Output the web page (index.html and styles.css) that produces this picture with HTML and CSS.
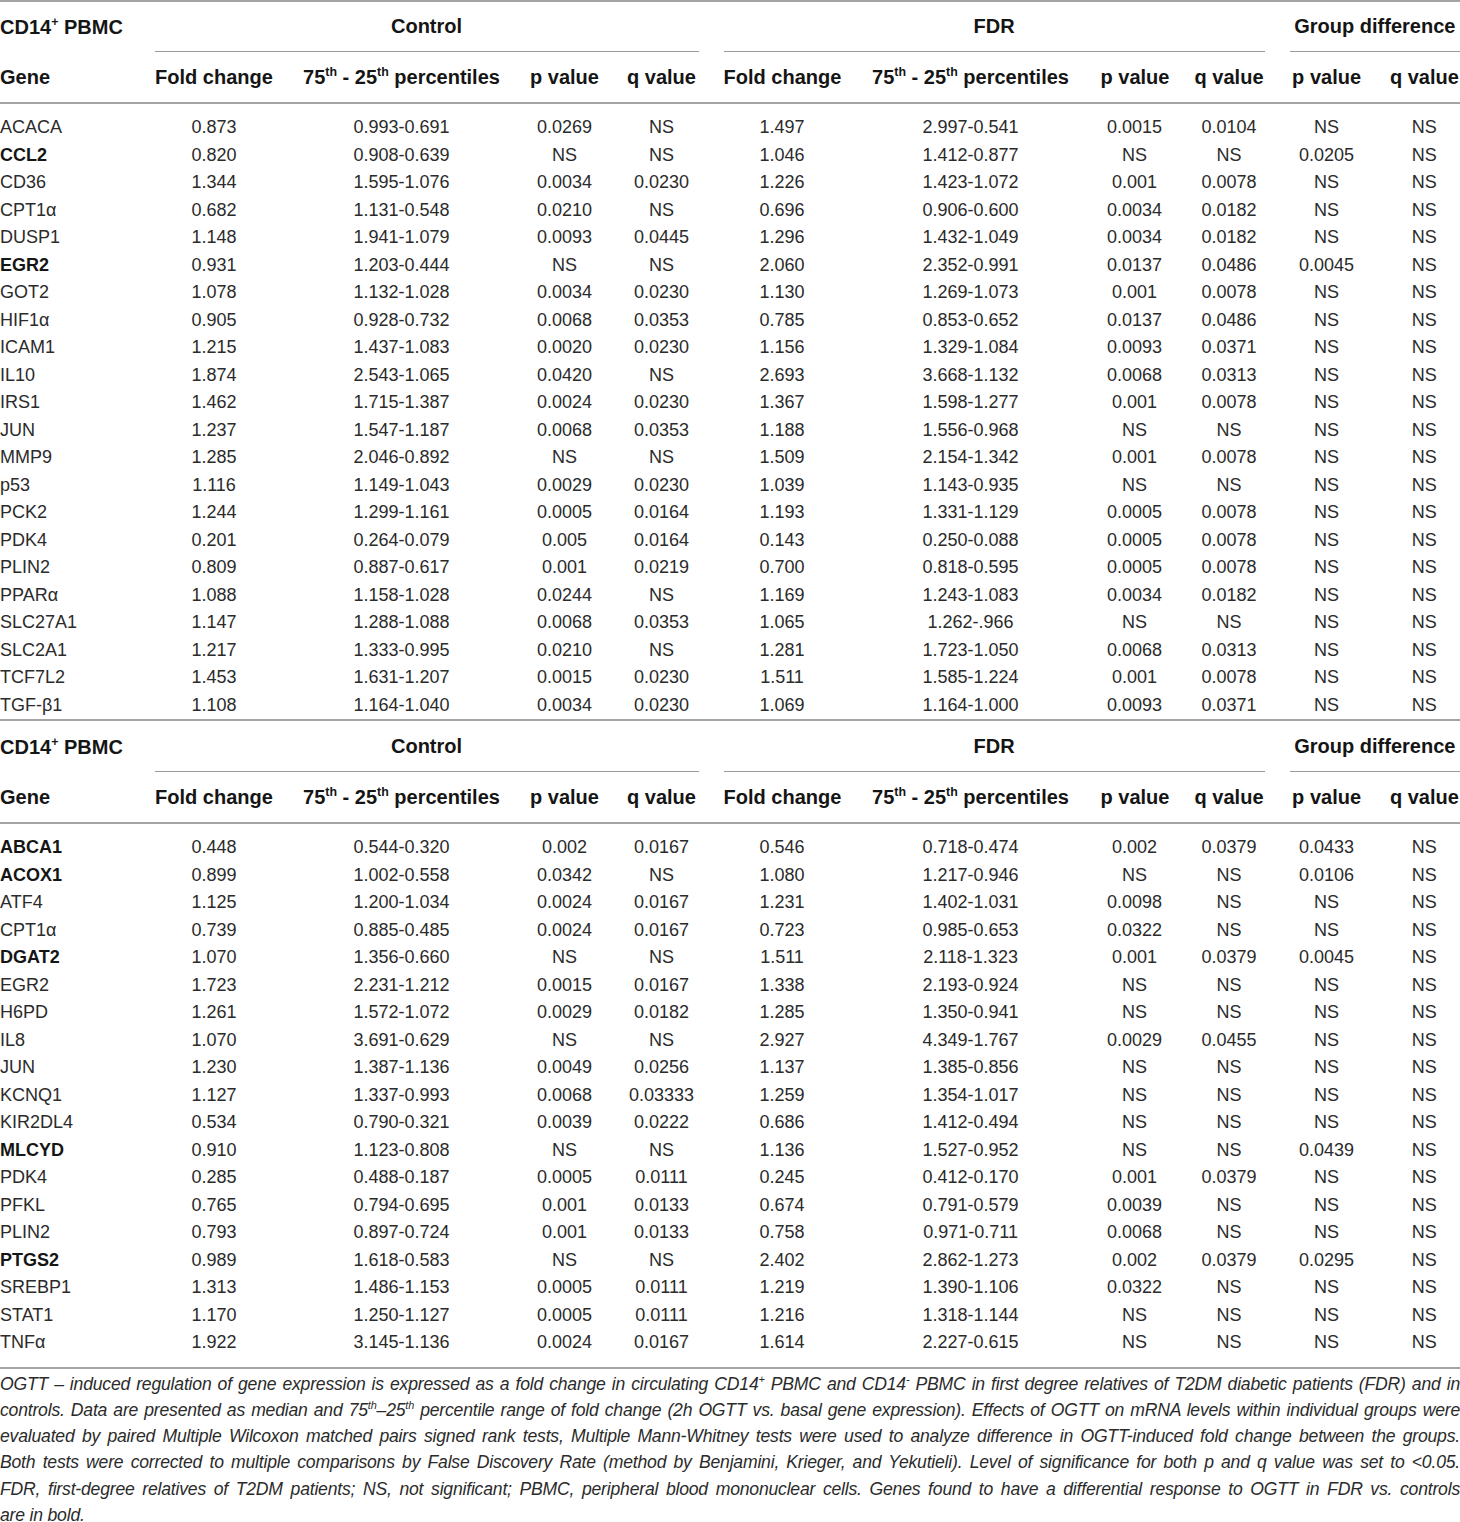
FILE: index.html
```html
<!DOCTYPE html>
<html>
  <head>
    <meta charset="utf-8">
    <title>OGTT-induced gene expression in CD14 PBMC</title>
    <link rel="stylesheet" href="styles.css">
  </head>
  <body>
    <div class="page">
      <table class="genes">
        <colgroup>
          <col class="c-gene"><col class="c-fc"><col class="c-pct"><col class="c-p"><col class="c-q">
          <col class="c-fc2"><col class="c-pct2"><col class="c-p2"><col class="c-q2">
          <col class="c-gp"><col class="c-gq">
        </colgroup>
        <thead>
          <tr class="top">
            <th class="first">CD14<sup>+</sup> PBMC</th>
            <th colspan="4" class="grp"><span>Control</span></th>
            <th colspan="4" class="grp"><span>FDR</span></th>
            <th colspan="2" class="grp last"><span>Group difference</span></th>
          </tr>
          <tr class="cols">
            <th class="first">Gene</th>
            <th>Fold change</th>
            <th>75<sup>th</sup> - 25<sup>th</sup> percentiles</th>
            <th>p value</th>
            <th>q value</th>
            <th>Fold change</th>
            <th>75<sup>th</sup> - 25<sup>th</sup> percentiles</th>
            <th>p value</th>
            <th>q value</th>
            <th>p value</th>
            <th class="last">q value</th>
          </tr>
        </thead>
        <tbody>
          <tr class="lead"><td>ACACA</td><td>0.873</td><td>0.993-0.691</td><td>0.0269</td><td>NS</td><td>1.497</td><td>2.997-0.541</td><td>0.0015</td><td>0.0104</td><td>NS</td><td>NS</td></tr>
          <tr><td class="hit">CCL2</td><td>0.820</td><td>0.908-0.639</td><td>NS</td><td>NS</td><td>1.046</td><td>1.412-0.877</td><td>NS</td><td>NS</td><td>0.0205</td><td>NS</td></tr>
          <tr><td>CD36</td><td>1.344</td><td>1.595-1.076</td><td>0.0034</td><td>0.0230</td><td>1.226</td><td>1.423-1.072</td><td>0.001</td><td>0.0078</td><td>NS</td><td>NS</td></tr>
          <tr><td>CPT1α</td><td>0.682</td><td>1.131-0.548</td><td>0.0210</td><td>NS</td><td>0.696</td><td>0.906-0.600</td><td>0.0034</td><td>0.0182</td><td>NS</td><td>NS</td></tr>
          <tr><td>DUSP1</td><td>1.148</td><td>1.941-1.079</td><td>0.0093</td><td>0.0445</td><td>1.296</td><td>1.432-1.049</td><td>0.0034</td><td>0.0182</td><td>NS</td><td>NS</td></tr>
          <tr><td class="hit">EGR2</td><td>0.931</td><td>1.203-0.444</td><td>NS</td><td>NS</td><td>2.060</td><td>2.352-0.991</td><td>0.0137</td><td>0.0486</td><td>0.0045</td><td>NS</td></tr>
          <tr><td>GOT2</td><td>1.078</td><td>1.132-1.028</td><td>0.0034</td><td>0.0230</td><td>1.130</td><td>1.269-1.073</td><td>0.001</td><td>0.0078</td><td>NS</td><td>NS</td></tr>
          <tr><td>HIF1α</td><td>0.905</td><td>0.928-0.732</td><td>0.0068</td><td>0.0353</td><td>0.785</td><td>0.853-0.652</td><td>0.0137</td><td>0.0486</td><td>NS</td><td>NS</td></tr>
          <tr><td>ICAM1</td><td>1.215</td><td>1.437-1.083</td><td>0.0020</td><td>0.0230</td><td>1.156</td><td>1.329-1.084</td><td>0.0093</td><td>0.0371</td><td>NS</td><td>NS</td></tr>
          <tr><td>IL10</td><td>1.874</td><td>2.543-1.065</td><td>0.0420</td><td>NS</td><td>2.693</td><td>3.668-1.132</td><td>0.0068</td><td>0.0313</td><td>NS</td><td>NS</td></tr>
          <tr><td>IRS1</td><td>1.462</td><td>1.715-1.387</td><td>0.0024</td><td>0.0230</td><td>1.367</td><td>1.598-1.277</td><td>0.001</td><td>0.0078</td><td>NS</td><td>NS</td></tr>
          <tr><td>JUN</td><td>1.237</td><td>1.547-1.187</td><td>0.0068</td><td>0.0353</td><td>1.188</td><td>1.556-0.968</td><td>NS</td><td>NS</td><td>NS</td><td>NS</td></tr>
          <tr><td>MMP9</td><td>1.285</td><td>2.046-0.892</td><td>NS</td><td>NS</td><td>1.509</td><td>2.154-1.342</td><td>0.001</td><td>0.0078</td><td>NS</td><td>NS</td></tr>
          <tr><td>p53</td><td>1.116</td><td>1.149-1.043</td><td>0.0029</td><td>0.0230</td><td>1.039</td><td>1.143-0.935</td><td>NS</td><td>NS</td><td>NS</td><td>NS</td></tr>
          <tr><td>PCK2</td><td>1.244</td><td>1.299-1.161</td><td>0.0005</td><td>0.0164</td><td>1.193</td><td>1.331-1.129</td><td>0.0005</td><td>0.0078</td><td>NS</td><td>NS</td></tr>
          <tr><td>PDK4</td><td>0.201</td><td>0.264-0.079</td><td>0.005</td><td>0.0164</td><td>0.143</td><td>0.250-0.088</td><td>0.0005</td><td>0.0078</td><td>NS</td><td>NS</td></tr>
          <tr><td>PLIN2</td><td>0.809</td><td>0.887-0.617</td><td>0.001</td><td>0.0219</td><td>0.700</td><td>0.818-0.595</td><td>0.0005</td><td>0.0078</td><td>NS</td><td>NS</td></tr>
          <tr><td>PPARα</td><td>1.088</td><td>1.158-1.028</td><td>0.0244</td><td>NS</td><td>1.169</td><td>1.243-1.083</td><td>0.0034</td><td>0.0182</td><td>NS</td><td>NS</td></tr>
          <tr><td>SLC27A1</td><td>1.147</td><td>1.288-1.088</td><td>0.0068</td><td>0.0353</td><td>1.065</td><td>1.262-.966</td><td>NS</td><td>NS</td><td>NS</td><td>NS</td></tr>
          <tr><td>SLC2A1</td><td>1.217</td><td>1.333-0.995</td><td>0.0210</td><td>NS</td><td>1.281</td><td>1.723-1.050</td><td>0.0068</td><td>0.0313</td><td>NS</td><td>NS</td></tr>
          <tr><td>TCF7L2</td><td>1.453</td><td>1.631-1.207</td><td>0.0015</td><td>0.0230</td><td>1.511</td><td>1.585-1.224</td><td>0.001</td><td>0.0078</td><td>NS</td><td>NS</td></tr>
          <tr><td>TGF-β1</td><td>1.108</td><td>1.164-1.040</td><td>0.0034</td><td>0.0230</td><td>1.069</td><td>1.164-1.000</td><td>0.0093</td><td>0.0371</td><td>NS</td><td>NS</td></tr>
        </tbody>
      </table>

      <table class="genes second">
        <colgroup>
          <col class="c-gene"><col class="c-fc"><col class="c-pct"><col class="c-p"><col class="c-q">
          <col class="c-fc2"><col class="c-pct2"><col class="c-p2"><col class="c-q2">
          <col class="c-gp"><col class="c-gq">
        </colgroup>
        <thead>
          <tr class="top">
            <th class="first">CD14<sup>+</sup> PBMC</th>
            <th colspan="4" class="grp"><span>Control</span></th>
            <th colspan="4" class="grp"><span>FDR</span></th>
            <th colspan="2" class="grp last"><span>Group difference</span></th>
          </tr>
          <tr class="cols">
            <th class="first">Gene</th>
            <th>Fold change</th>
            <th>75<sup>th</sup> - 25<sup>th</sup> percentiles</th>
            <th>p value</th>
            <th>q value</th>
            <th>Fold change</th>
            <th>75<sup>th</sup> - 25<sup>th</sup> percentiles</th>
            <th>p value</th>
            <th>q value</th>
            <th>p value</th>
            <th class="last">q value</th>
          </tr>
        </thead>
        <tbody>
          <tr class="lead"><td class="hit">ABCA1</td><td>0.448</td><td>0.544-0.320</td><td>0.002</td><td>0.0167</td><td>0.546</td><td>0.718-0.474</td><td>0.002</td><td>0.0379</td><td>0.0433</td><td>NS</td></tr>
          <tr><td class="hit">ACOX1</td><td>0.899</td><td>1.002-0.558</td><td>0.0342</td><td>NS</td><td>1.080</td><td>1.217-0.946</td><td>NS</td><td>NS</td><td>0.0106</td><td>NS</td></tr>
          <tr><td>ATF4</td><td>1.125</td><td>1.200-1.034</td><td>0.0024</td><td>0.0167</td><td>1.231</td><td>1.402-1.031</td><td>0.0098</td><td>NS</td><td>NS</td><td>NS</td></tr>
          <tr><td>CPT1α</td><td>0.739</td><td>0.885-0.485</td><td>0.0024</td><td>0.0167</td><td>0.723</td><td>0.985-0.653</td><td>0.0322</td><td>NS</td><td>NS</td><td>NS</td></tr>
          <tr><td class="hit">DGAT2</td><td>1.070</td><td>1.356-0.660</td><td>NS</td><td>NS</td><td>1.511</td><td>2.118-1.323</td><td>0.001</td><td>0.0379</td><td>0.0045</td><td>NS</td></tr>
          <tr><td>EGR2</td><td>1.723</td><td>2.231-1.212</td><td>0.0015</td><td>0.0167</td><td>1.338</td><td>2.193-0.924</td><td>NS</td><td>NS</td><td>NS</td><td>NS</td></tr>
          <tr><td>H6PD</td><td>1.261</td><td>1.572-1.072</td><td>0.0029</td><td>0.0182</td><td>1.285</td><td>1.350-0.941</td><td>NS</td><td>NS</td><td>NS</td><td>NS</td></tr>
          <tr><td>IL8</td><td>1.070</td><td>3.691-0.629</td><td>NS</td><td>NS</td><td>2.927</td><td>4.349-1.767</td><td>0.0029</td><td>0.0455</td><td>NS</td><td>NS</td></tr>
          <tr><td>JUN</td><td>1.230</td><td>1.387-1.136</td><td>0.0049</td><td>0.0256</td><td>1.137</td><td>1.385-0.856</td><td>NS</td><td>NS</td><td>NS</td><td>NS</td></tr>
          <tr><td>KCNQ1</td><td>1.127</td><td>1.337-0.993</td><td>0.0068</td><td>0.03333</td><td>1.259</td><td>1.354-1.017</td><td>NS</td><td>NS</td><td>NS</td><td>NS</td></tr>
          <tr><td>KIR2DL4</td><td>0.534</td><td>0.790-0.321</td><td>0.0039</td><td>0.0222</td><td>0.686</td><td>1.412-0.494</td><td>NS</td><td>NS</td><td>NS</td><td>NS</td></tr>
          <tr><td class="hit">MLCYD</td><td>0.910</td><td>1.123-0.808</td><td>NS</td><td>NS</td><td>1.136</td><td>1.527-0.952</td><td>NS</td><td>NS</td><td>0.0439</td><td>NS</td></tr>
          <tr><td>PDK4</td><td>0.285</td><td>0.488-0.187</td><td>0.0005</td><td>0.0111</td><td>0.245</td><td>0.412-0.170</td><td>0.001</td><td>0.0379</td><td>NS</td><td>NS</td></tr>
          <tr><td>PFKL</td><td>0.765</td><td>0.794-0.695</td><td>0.001</td><td>0.0133</td><td>0.674</td><td>0.791-0.579</td><td>0.0039</td><td>NS</td><td>NS</td><td>NS</td></tr>
          <tr><td>PLIN2</td><td>0.793</td><td>0.897-0.724</td><td>0.001</td><td>0.0133</td><td>0.758</td><td>0.971-0.711</td><td>0.0068</td><td>NS</td><td>NS</td><td>NS</td></tr>
          <tr><td class="hit">PTGS2</td><td>0.989</td><td>1.618-0.583</td><td>NS</td><td>NS</td><td>2.402</td><td>2.862-1.273</td><td>0.002</td><td>0.0379</td><td>0.0295</td><td>NS</td></tr>
          <tr><td>SREBP1</td><td>1.313</td><td>1.486-1.153</td><td>0.0005</td><td>0.0111</td><td>1.219</td><td>1.390-1.106</td><td>0.0322</td><td>NS</td><td>NS</td><td>NS</td></tr>
          <tr><td>STAT1</td><td>1.170</td><td>1.250-1.127</td><td>0.0005</td><td>0.0111</td><td>1.216</td><td>1.318-1.144</td><td>NS</td><td>NS</td><td>NS</td><td>NS</td></tr>
          <tr class="tail"><td>TNFα</td><td>1.922</td><td>3.145-1.136</td><td>0.0024</td><td>0.0167</td><td>1.614</td><td>2.227-0.615</td><td>NS</td><td>NS</td><td>NS</td><td>NS</td></tr>
        </tbody>
      </table>

      <p class="note">
        <span>OGTT – induced regulation of gene expression is expressed as a fold change in circulating CD14<sup>+</sup> PBMC and CD14<sup>-</sup> PBMC in first degree relatives of T2DM diabetic patients (FDR) and in</span>
        <span>controls. Data are presented as median and 75<sup>th</sup>–25<sup>th</sup> percentile range of fold change (2h OGTT vs. basal gene expression). Effects of OGTT on mRNA levels within individual groups were</span>
        <span>evaluated by paired Multiple Wilcoxon matched pairs signed rank tests, Multiple Mann-Whitney tests were used to analyze difference in OGTT-induced fold change between the groups.</span>
        <span>Both tests were corrected to multiple comparisons by False Discovery Rate (method by Benjamini, Krieger, and Yekutieli). Level of significance for both p and q value was set to &lt;0.05.</span>
        <span>FDR, first-degree relatives of T2DM patients; NS, not significant; PBMC, peripheral blood mononuclear cells. Genes found to have a differential response to OGTT in FDR vs. controls</span>
        <span class="end">are in bold.</span>
      </p>
    </div>
  </body>
</html>
```

FILE: styles.css
```css
body {
  margin: 0;
  background-color: #ffffff;
  color: #2b2b2b;
  font-family: "Liberation Sans", Arial, sans-serif;
}

.page {
  width: 1460px;
}

.genes {
  width: 1460px;
  border-collapse: collapse;
  table-layout: fixed;
  border-top: 2px solid #a4a4a4;
}

.c-gene { width: 142px; }
.c-fc { width: 144px; }
.c-pct { width: 231px; }
.c-p { width: 95px; }
.c-q { width: 99px; }
.c-fc2 { width: 142px; }
.c-pct2 { width: 235px; }
.c-p2 { width: 93px; }
.c-q2 { width: 96px; }
.c-gp { width: 99px; }
.c-gq { width: 84px; }

th {
  padding: 0 12.5px;
  font-size: 20px;
  font-weight: bold;
  color: #151515;
  text-align: center;
  white-space: nowrap;
}

td {
  padding: 0 12.5px;
  font-size: 18px;
  line-height: 27.5px;
  text-align: center;
  white-space: nowrap;
}

.top th {
  height: 50px;
  line-height: 49px;
  vertical-align: bottom;
}

.second .top th {
  height: 51px;
  line-height: 50px;
}

.grp span {
  display: block;
  border-bottom: 1px solid #9a9a9a;
}

.cols th {
  height: 50px;
  line-height: 50px;
  border-bottom: 2px solid #a4a4a4;
}

th.first,
td:first-child {
  padding-left: 0;
  text-align: left;
}

th.last,
td:last-child {
  padding-right: 0;
}

.lead td {
  padding-top: 10px;
}

.tail td {
  padding-bottom: 10px;
}

.hit {
  font-weight: bold;
  color: #151515;
}

sup {
  font-size: 0.62em;
  line-height: 0;
}

.second {
  border-bottom: 2px solid #a4a4a4;
}

.note {
  margin: 0;
  padding-top: 2px;
  font-size: 17.6px;
  font-style: italic;
  line-height: 26.3px;
  letter-spacing: -0.2px;
}

.note span {
  display: block;
  white-space: nowrap;
  text-align: justify;
  text-align-last: justify;
}

.note span.end {
  text-align-last: left;
}
```
